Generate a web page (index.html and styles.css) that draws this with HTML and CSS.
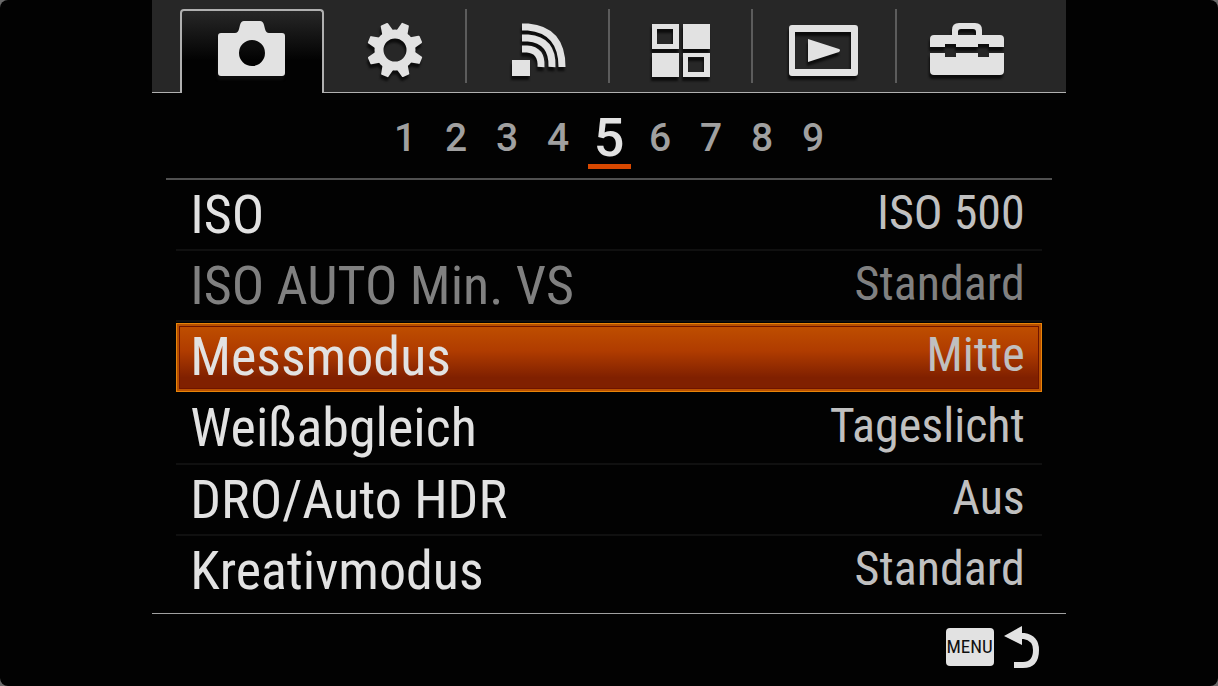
FILE: index.html
```html
<!DOCTYPE html>
<html lang="de">
<head>
    <meta charset="UTF-8">
    <meta name="viewport" content="width=device-width, initial-scale=1.0">
    <title>Kameramenü</title>
    <link rel="stylesheet" href="styles.css">
</head>
<body>
    <div class="display">
        <main class="screen">
            <nav class="tabs" aria-label="Menü">
                <button class="tab active" type="button" aria-label="Kamera">
                    <svg class="icon" width="84" height="60" viewBox="0 0 84 60">
                        <path fill-rule="evenodd" d="M11 16h14q3 0 4-4l1-4q1-4 4-4h16q3 0 4 4l1 4q1 4 4 4h13q3 0 3 3v37q0 3-3 3H11q-3 0-3-3V19q0-3 3-3zM42 23a13 13 0 1 0 0 26a13 13 0 1 0 0-26z"/>
                    </svg>
                </button>
                <button class="tab" type="button" aria-label="Einstellungen">
                    <svg class="icon" width="84" height="60" viewBox="0 0 84 60">
                        <g transform="translate(42 32)">
                            <circle r="16" fill="none" stroke="#e2e2e2" stroke-width="9"/>
                            <path d="M-6-18L-4-27Q-4-28-3-28H3Q4-28 4-27L6-18z" transform="rotate(22)"/>
                            <path d="M-6-18L-4-27Q-4-28-3-28H3Q4-28 4-27L6-18z" transform="rotate(67)"/>
                            <path d="M-6-18L-4-27Q-4-28-3-28H3Q4-28 4-27L6-18z" transform="rotate(112)"/>
                            <path d="M-6-18L-4-27Q-4-28-3-28H3Q4-28 4-27L6-18z" transform="rotate(157)"/>
                            <path d="M-6-18L-4-27Q-4-28-3-28H3Q4-28 4-27L6-18z" transform="rotate(202)"/>
                            <path d="M-6-18L-4-27Q-4-28-3-28H3Q4-28 4-27L6-18z" transform="rotate(247)"/>
                            <path d="M-6-18L-4-27Q-4-28-3-28H3Q4-28 4-27L6-18z" transform="rotate(292)"/>
                            <path d="M-6-18L-4-27Q-4-28-3-28H3Q4-28 4-27L6-18z" transform="rotate(337)"/>
                        </g>
                    </svg>
                </button>
                <button class="tab" type="button" aria-label="Drahtlos">
                    <svg class="icon" width="84" height="60" viewBox="0 0 84 60">
                        <rect x="16" y="42" width="18" height="16"/>
                        <g fill="none" stroke="#e2e2e2" stroke-width="7">
                            <path d="M26 31h5q15 1 14 18"/>
                            <path d="M26 20h6q25 2 24 29"/>
                            <path d="M26 9h6q34 3 34 40"/>
                        </g>
                    </svg>
                </button>
                <button class="tab" type="button" aria-label="Applikationen">
                    <svg class="icon" width="84" height="60" viewBox="0 0 84 60">
                        <path fill-rule="evenodd" d="M12 6h27v25H12zM17 11v15h16V11zM43 6h27v25H43zM12 35h27v24H12zM43 35h27v24H43zM48 39v15h16V39z"/>
                    </svg>
                </button>
                <button class="tab" type="button" aria-label="Wiedergabe">
                    <svg class="icon" width="84" height="60" viewBox="0 0 84 60">
                        <path fill-rule="evenodd" d="M9 7h63q3 0 3 3v45q0 3-3 3H9q-3 0-3-3V10q0-3 3-3zM12 14v37h56V14z"/>
                        <path d="M25 21l31 10q2 1 0 3L25 44z"/>
                    </svg>
                </button>
                <button class="tab" type="button" aria-label="Setup">
                    <svg class="icon" width="84" height="60" viewBox="0 0 84 60">
                        <path fill-rule="evenodd" d="M26 17v-5q0-7 7-7h16q7 0 7 7v5h18q4 0 4 4v8H63v-3H52v3H30v-3H19v3H4v-8q0-4 4-4zM32 17h18v-3q0-3-3-3H35q-3 0-3 3z"/>
                        <path d="M4 35h15v4h11v-4h22v4h11v-4h15v18q0 4-4 4H8q-4 0-4-4z"/>
                    </svg>
                </button>
            </nav>

            <nav class="pages" aria-label="Seiten">
                <button class="page" type="button">1</button>
                <button class="page" type="button">2</button>
                <button class="page" type="button">3</button>
                <button class="page" type="button">4</button>
                <button class="page current" type="button">5</button>
                <button class="page" type="button">6</button>
                <button class="page" type="button">7</button>
                <button class="page" type="button">8</button>
                <button class="page" type="button">9</button>
            </nav>

            <div class="settings">
                <button class="row" type="button">
                    <span class="label">ISO</span>
                    <span class="value">ISO 500</span>
                </button>
                <button class="row" type="button" disabled>
                    <span class="label">ISO AUTO Min. VS</span>
                    <span class="value">Standard</span>
                </button>
                <button class="row selected" type="button">
                    <span class="label">Messmodus</span>
                    <span class="value">Mitte</span>
                </button>
                <button class="row" type="button">
                    <span class="label">Weißabgleich</span>
                    <span class="value">Tageslicht</span>
                </button>
                <button class="row" type="button">
                    <span class="label">DRO/Auto HDR</span>
                    <span class="value">Aus</span>
                </button>
                <button class="row" type="button">
                    <span class="label">Kreativmodus</span>
                    <span class="value">Standard</span>
                </button>
            </div>

            <footer class="footer">
                <button class="back" type="button">
                    <span class="key">MENU</span>
                    <svg class="arrow" width="38" height="44" viewBox="0 0 38 44" aria-hidden="true">
                        <path d="M2 10L20 0v19z"/>
                        <path d="M17 10h5q12 2 12 14q0 15-13 15h-9" fill="none" stroke="#e2e2e2" stroke-width="6"/>
                    </svg>
                </button>
            </footer>
        </main>
    </div>
</body>
</html>
```
FILE: styles.css
```css
* {
    margin: 0;
    padding: 0;
    box-sizing: border-box;
}

body {
    background: #6a6a6a;
    font-family: "Roboto Condensed", Roboto, "Liberation Sans", sans-serif;
    color: #e2e2e2;
}

button {
    background: none;
    border: none;
    color: inherit;
    font: inherit;
    cursor: pointer;
}

.display {
    min-height: 100vh;
    display: flex;
    justify-content: center;
    background: #020202;
    border-radius: 8px;
}

.screen {
    width: 75%;
    display: flex;
    flex-direction: column;
}

/* Menu tabs */
.tabs {
    display: grid;
    grid-template-columns: repeat(6, 1fr);
    height: 93px;
    padding: 9px 26px 0 28px;
    background: #272727;
    border-bottom: 1px solid #b0b0b0;
}

.tab {
    display: flex;
    align-items: flex-start;
    justify-content: center;
    padding-top: 9px;
    background: linear-gradient(#5c5c5c, #5c5c5c) right top / 2px 74px no-repeat;
}

.tab:last-child {
    background: none;
}

.tab.active {
    margin-bottom: -1px;
    padding-top: 6px;
    background: linear-gradient(#272727, #020202 60%);
    border: 2px solid #b0b0b0;
    border-bottom: none;
    border-radius: 4px 4px 0 0;
}

.icon {
    fill: #e2e2e2;
    filter: drop-shadow(-1px 4px 1px #0c0c0c);
}

/* Page numbers */
.pages {
    display: flex;
    justify-content: center;
    gap: 8px;
    height: 87px;
    margin: 0 14px;
    padding-top: 16px;
    border-bottom: 2px solid #505050;
    font-family: Roboto, "Liberation Sans", sans-serif;
}

.page {
    width: 43px;
    height: 59px;
    color: #a0a0a0;
    font-size: 39px;
    font-weight: 500;
    line-height: 58px;
    border-bottom: 5px solid transparent;
}

.page.current {
    height: 60px;
    color: #e2e2e2;
    font-size: 54px;
    border-bottom-color: #d84800;
}

/* Setting rows */
.settings {
    flex: 1;
    display: grid;
    grid-auto-rows: 1fr;
    margin: 0 24px;
    padding-bottom: 6px;
}

.row {
    display: flex;
    align-items: flex-start;
    justify-content: space-between;
    padding: 2px 17px 0 14px;
    border-bottom: 2px solid #101010;
    text-align: left;
    white-space: nowrap;
}

.row:last-child {
    border-bottom: none;
}

.row:disabled {
    color: #808080;
}

.label {
    font-size: 54px;
    line-height: 66px;
}

.value {
    color: #c0c0c0;
    font-size: 48px;
    line-height: 62px;
}

.row:disabled .value {
    color: #808080;
}

.row.selected {
    margin: 1px 0;
    padding: 0 16px 0 13px;
    border: 1px solid #e88408;
    background: linear-gradient(#c05000, #b03c00 40%, #802000 80%);
    box-shadow: inset 0 0 0 2px #b85000, inset 0 0 0 3px #701400;
}

/* Footer */
.footer {
    display: flex;
    justify-content: flex-end;
    height: 73px;
    padding: 12px 26px 0;
    border-top: 1px solid #a0a0a0;
}

.back {
    display: flex;
    align-items: flex-start;
    gap: 8px;
}

.key {
    margin-top: 2px;
    padding: 0 1px;
    border-radius: 4px;
    background: #e2e2e2;
    color: #101010;
    font-size: 19px;
    line-height: 38px;
}

.arrow {
    fill: #e2e2e2;
}
```
